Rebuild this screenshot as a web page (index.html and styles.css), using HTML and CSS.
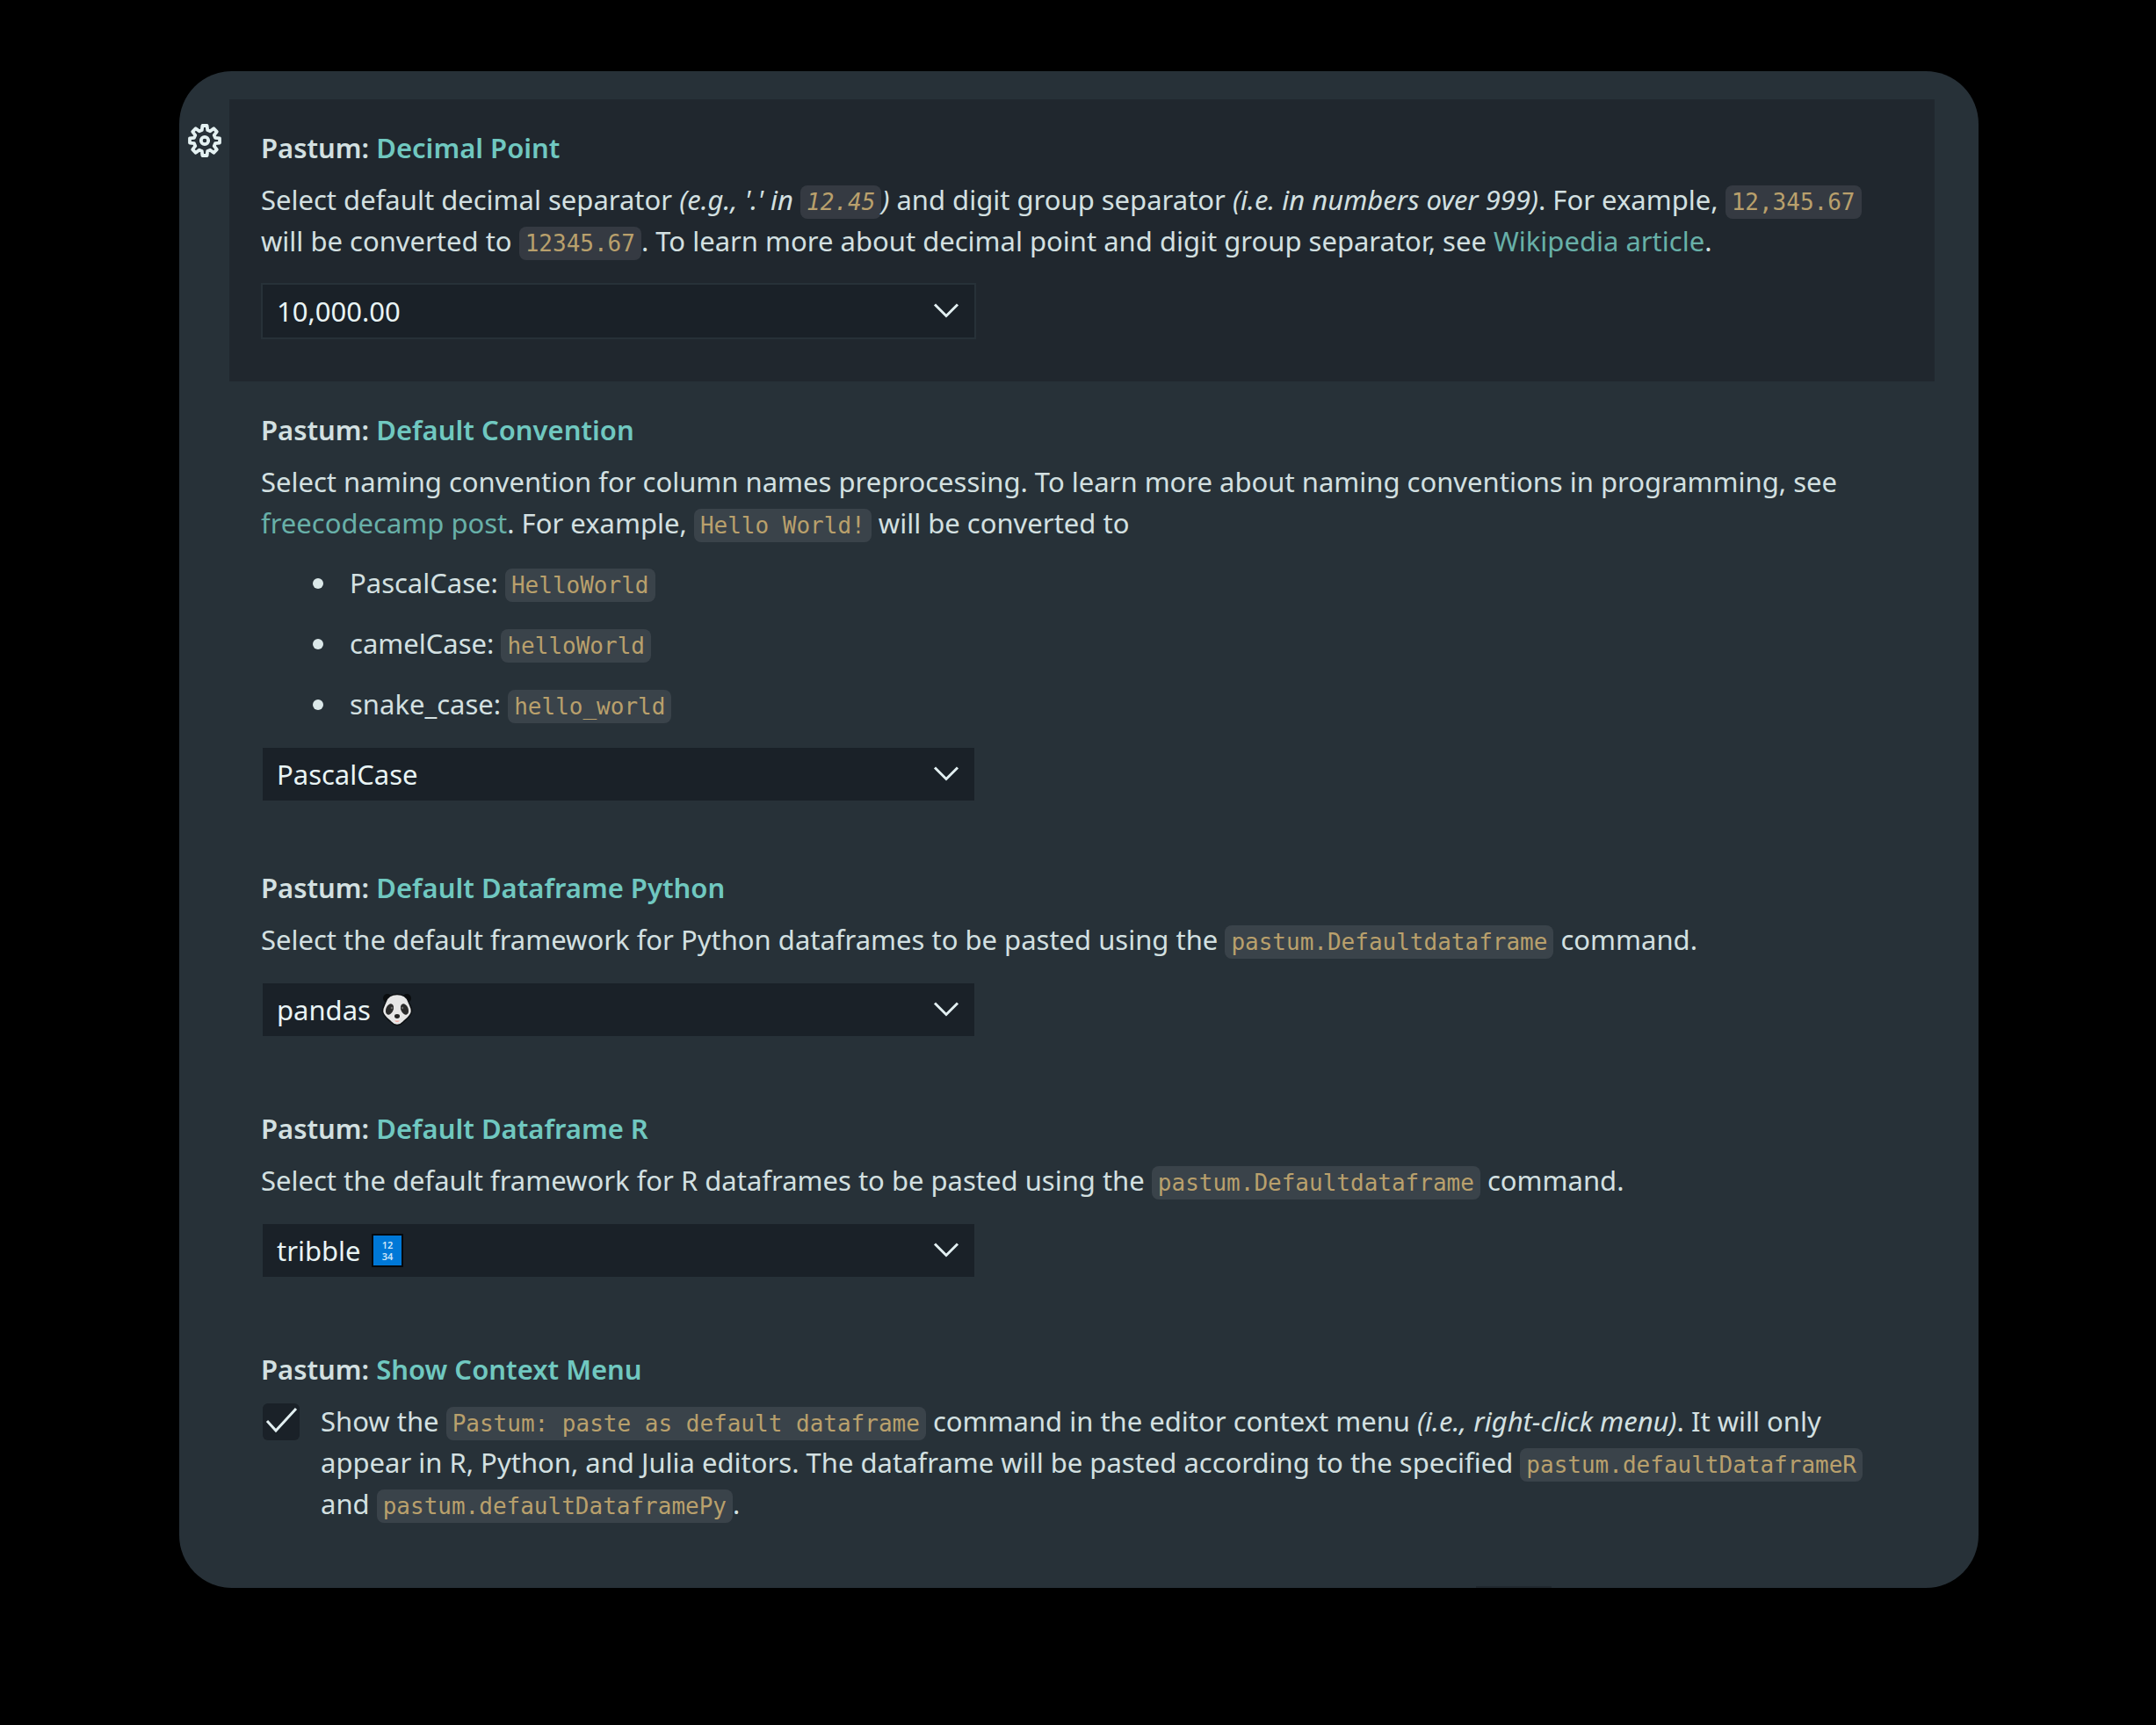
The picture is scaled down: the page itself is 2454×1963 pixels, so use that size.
FILE: index.html
```html
<!DOCTYPE html>
<html lang="en">
<head>
<meta charset="utf-8">
<meta name="viewport" content="width=device-width, initial-scale=1">
<title>Pastum settings</title>
<link rel="stylesheet" href="styles.css">
</head>
<body>
<main class="card">
  <section class="row">
    <button class="gear" type="button" aria-label="More actions">
      <svg viewBox="0 0 40 40" width="40" height="40" aria-hidden="true">
        <path d="M16.800 8 L17.400 3 L22.600 3 L23.200 8 L26.200 9.300 L30.200 6.200 L33.800 9.800 L30.700 13.800 L32 16.800 L37 17.400 L37 22.600 L32 23.200 L30.700 26.200 L33.800 30.200 L30.200 33.800 L26.200 30.700 L23.200 32 L22.600 37 L17.400 37 L16.800 32 L13.800 30.700 L9.800 33.800 L6.200 30.200 L9.300 26.200 L8 23.200 L3 22.600 L3 17.400 L8 16.800 L9.300 13.800 L6.200 9.800 L9.800 6.200 L13.800 9.300 Z" fill="none" stroke="currentColor" stroke-width="3.800" stroke-linejoin="round"/>
        <circle cx="20" cy="20" r="4.200" fill="none" stroke="currentColor" stroke-width="3.800"/>
      </svg>
    </button>
    <div class="setting setting--active">
      <h2 class="title">Pastum: <a href="#decimal-point">Decimal Point</a></h2>
      <p class="text">Select default decimal separator <em>(e.g., '.' in <code>12.45</code>)</em> and digit group separator <em>(i.e. in numbers over 999)</em>. For example, <code>12,345.67</code> will be converted to <code>12345.67</code>. To learn more about decimal point and digit group separator, see <a href="#wikipedia">Wikipedia article</a>.</p>
      <div class="dropdown">
        <select aria-label="Decimal Point"><option>10,000.00</option></select>
        <svg class="chevron" viewBox="0 0 32 20" width="32" height="20" aria-hidden="true"><path d="M3 2.500 L16 15.500 L29 2.500"/></svg>
      </div>
    </div>
  </section>

  <section class="row">
    <div class="setting setting--list">
      <h2 class="title">Pastum: <a href="#default-convention">Default Convention</a></h2>
      <p class="text">Select naming convention for column names preprocessing. To learn more about naming conventions in programming, see <a href="#freecodecamp">freecodecamp post</a>. For example, <code>Hello World!</code> will be converted to</p>
      <ul class="cases">
        <li><span>PascalCase: <code>HelloWorld</code></span></li>
        <li><span>camelCase: <code>helloWorld</code></span></li>
        <li><span>snake_case: <code>hello_world</code></span></li>
      </ul>
      <div class="dropdown">
        <select aria-label="Default Convention"><option>PascalCase</option></select>
        <svg class="chevron" viewBox="0 0 32 20" width="32" height="20" aria-hidden="true"><path d="M3 2.500 L16 15.500 L29 2.500"/></svg>
      </div>
    </div>
  </section>

  <section class="row">
    <div class="setting">
      <h2 class="title">Pastum: <a href="#default-dataframe-python">Default Dataframe Python</a></h2>
      <p class="text">Select the default framework for Python dataframes to be pasted using the <code>pastum.Defaultdataframe</code> command.</p>
      <div class="dropdown">
        <select aria-label="Default Dataframe Python"><option>pandas</option></select>
        <svg class="emoji emoji--panda" viewBox="0 0 36 38" width="36" height="38" aria-hidden="true">
          <circle cx="7" cy="6" r="5" fill="#0b0d0f"/><circle cx="29" cy="6" r="5" fill="#0b0d0f"/>
          <path d="M18 1.500 C25 1.500 29 4 31 10 C32.500 14 35 17 34.500 21 C34 26 28 30 25 33 C21 37.500 15 37.500 11 33 C8 30 2 26 1.500 21 C1 17 3.500 14 5 10 C7 4 11 1.500 18 1.500 Z" fill="#e6e6e6" stroke="#0d1013" stroke-width="1.500"/>
          <ellipse cx="9.500" cy="18.500" rx="4.200" ry="6.500" fill="#2b2b2b" transform="rotate(22 9.500 18.500)"/>
          <ellipse cx="26.500" cy="18.500" rx="4.200" ry="6.500" fill="#2b2b2b" transform="rotate(-22 26.500 18.500)"/>
          <circle cx="12" cy="17" r="1.300" fill="#666"/><circle cx="24" cy="17" r="1.300" fill="#666"/>
          <ellipse cx="18" cy="26.500" rx="3" ry="2.400" fill="#222"/>
          <path d="M15 31.500 Q18 34.500 21 31.500 Z" fill="#f3a79d"/>
        </svg>
        <svg class="chevron" viewBox="0 0 32 20" width="32" height="20" aria-hidden="true"><path d="M3 2.500 L16 15.500 L29 2.500"/></svg>
      </div>
    </div>
  </section>

  <section class="row">
    <div class="setting">
      <h2 class="title">Pastum: <a href="#default-dataframe-r">Default Dataframe R</a></h2>
      <p class="text">Select the default framework for R dataframes to be pasted using the <code>pastum.Defaultdataframe</code> command.</p>
      <div class="dropdown">
        <select aria-label="Default Dataframe R"><option>tribble</option></select>
        <span class="emoji emoji--numbers"><span>12</span><span>34</span></span>
        <svg class="chevron" viewBox="0 0 32 20" width="32" height="20" aria-hidden="true"><path d="M3 2.500 L16 15.500 L29 2.500"/></svg>
      </div>
    </div>
  </section>

  <section class="row">
    <div class="setting setting--last">
      <h2 class="title">Pastum: <a href="#show-context-menu">Show Context Menu</a></h2>
      <div class="check">
        <span class="check__box">
          <input type="checkbox" id="context-menu" checked>
          <svg viewBox="0 0 42 42" width="42" height="42" aria-hidden="true"><path d="M5 20 L15 31 L38 6"/></svg>
        </span>
        <label class="text" for="context-menu">Show the <code>Pastum: paste as default dataframe</code> command in the editor context menu <em>(i.e., right-click menu)</em>. It will only appear in R, Python, and Julia editors. The dataframe will be pasted according to the specified <code>pastum.defaultDataframeR</code> and <code>pastum.defaultDataframePy</code>.</label>
      </div>
    </div>
  </section>
</main>
</body>
</html>
```
FILE: styles.css
```css
* {
  box-sizing: border-box;
}

body {
  margin: 0;
  padding: 81px 202px 81px 204px;
  background: #000;
  color: #d3e0e1;
  font-family: "Noto Sans", "Open Sans", sans-serif;
  font-size: 31px;
  line-height: 47px;
}

.card {
  padding: 32px 50px 0 0;
  border-radius: 60px;
  background: #273138;
  overflow: hidden;
}

/* The last setting is followed by the edge of the next, hidden one */
.card::after {
  content: "";
  display: block;
  width: 86px;
  height: 2px;
  margin-left: 1476px;
  background: #20272e;
}

.row {
  display: grid;
  grid-template-columns: 57px 1fr;
}

.gear {
  align-self: start;
  justify-self: center;
  display: flex;
  margin: 27px 0 0;
  padding: 0;
  border: 0;
  background: none;
  color: #e4f1f2;
}

.setting {
  grid-column: 2;
  padding: 32px 52px 48px 36px;
}

.setting--active {
  background: #20272e;
}

.setting--list {
  padding-bottom: 42px;
}

.setting--last {
  padding-bottom: 70px;
}

.title {
  margin: 0 0 12px;
  font-size: 31px;
  font-weight: 600;
}

.title a {
  color: #70c8c0;
}

a {
  color: #68b0a8;
  text-decoration: none;
}

.text {
  margin: 0;
}

code {
  padding: 4px 7px;
  border-radius: 8px;
  background: rgba(150, 150, 160, 0.18);
  color: #b9a06c;
  font-family: "DejaVu Sans Mono", monospace;
  font-size: 26px;
  line-height: 1;
}

.cases {
  display: grid;
  gap: 22px;
  margin: 21px 0 0;
  padding: 0 0 0 59px;
  list-style: none;
}

.cases li {
  display: flex;
  align-items: center;
  gap: 30px;
}

.cases li::before {
  content: "";
  width: 12px;
  height: 12px;
  border-radius: 50%;
  background: #dbe8e9;
}

.dropdown {
  display: grid;
  align-items: center;
  width: 814px;
  max-width: 100%;
  height: 64px;
  margin-top: 24px;
}

.dropdown > * {
  grid-area: 1 / 1;
}

.dropdown select {
  width: 100%;
  height: 64px;
  padding: 0 16px;
  border: 2px solid #273138;
  border-radius: 0;
  background: #1a2128;
  color: #e9f4f5;
  font: inherit;
  appearance: none;
}

.chevron {
  justify-self: end;
  margin-right: 18px;
  pointer-events: none;
}

.chevron path,
.check__box path {
  fill: none;
  stroke: #e2eff1;
  stroke-width: 3;
}

.emoji {
  pointer-events: none;
}

.emoji--panda {
  margin-left: 137px;
}

.emoji--numbers {
  display: grid;
  align-content: center;
  justify-items: center;
  width: 36px;
  height: 38px;
  margin-left: 126px;
  border: 2px solid #05090d;
  background: #0078d7;
  color: #cfe6f8;
  font-size: 11px;
  font-weight: 600;
  line-height: 13px;
}

.check {
  display: grid;
  grid-template-columns: 42px 1fr;
  gap: 24px;
  margin-left: 2px;
}

.check__box {
  display: grid;
  align-self: start;
  margin-top: 3px;
}

.check__box > * {
  grid-area: 1 / 1;
}

.check__box input {
  width: 42px;
  height: 42px;
  margin: 0;
  border-radius: 6px;
  background: #1a2128;
  appearance: none;
}

.check__box svg {
  pointer-events: none;
}
```
